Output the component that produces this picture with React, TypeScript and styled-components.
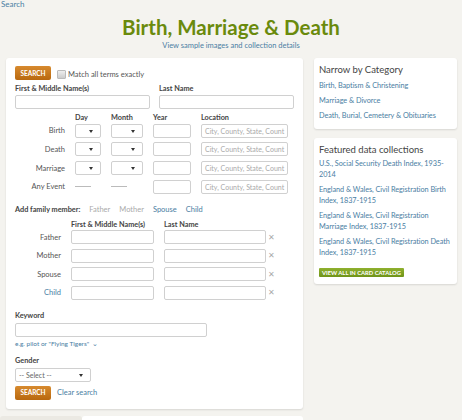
import React from 'react';
import styled, { createGlobalStyle } from 'styled-components';

const Global = createGlobalStyle`
  html, body {
    margin: 0;
    padding: 0;
    background: #f4f3ef;
    font-family: Lato, "Open Sans", Arial, sans-serif;
    color: #333;
  }
  * { box-sizing: border-box; }
`;

const Page = styled.div`
  width: 462px;
  height: 420px;
  overflow: hidden;
`;

const Crumb = styled.a`
  display: block;
  font-size: 8px;
  line-height: 9px;
  padding-left: 1px;
  color: #4a7ea3;
`;

const Title = styled.h1`
  margin: 5px 0 0;
  text-align: center;
  font-size: 20.5px;
  line-height: 26px;
  font-weight: 700;
  color: #6a8a0c;
`;

const SubLink = styled.a`
  display: block;
  text-align: center;
  font-size: 7.5px;
  line-height: 10px;
  margin-top: 1px;
  color: #4a7ea3;
`;

const Columns = styled.div`
  display: flex;
  gap: 11px;
  padding: 0 5px 0 6px;
  margin-top: 7px;
  align-items: flex-start;
`;

const Card = styled.div<{ $w: number }>`
  width: ${p => p.$w}px;
  background: #fff;
  border-radius: 3px;
  box-shadow: 0 1px 2px rgba(0, 0, 0, 0.12);
`;

const MainCard = styled(Card)`
  padding: 8px 9px 9px;
`;

const Side = styled.div`
  display: flex;
  flex-direction: column;
  gap: 9px;
`;

const SideCard = styled(Card)<{ $pb: number }>`
  padding: 5px 5px ${p => p.$pb}px;
`;

const SideTitle = styled.div`
  font-size: 9.5px;
  line-height: 13px;
  color: #444;
  margin-bottom: 2px;
`;

const SideLink = styled.a<{ $gap?: number }>`
  display: block;
  font-size: 7.3px;
  line-height: 11px;
  letter-spacing: -0.05px;
  color: #4a7ea3;
  margin-top: ${p => p.$gap ?? 4}px;
`;

const GreenBtn = styled.div`
  display: inline-block;
  margin-top: 10px;
  height: 9px;
  padding: 0 3px;
  font-size: 5.8px;
  line-height: 9px;
  font-weight: 700;
  color: #fff;
  background: linear-gradient(#8fb02e, #6f9418);
  border-radius: 1px;
`;

const Row = styled.div<{ $gap?: number; $mt?: number }>`
  display: flex;
  align-items: center;
  gap: ${p => p.$gap ?? 6}px;
  margin-top: ${p => p.$mt ?? 0}px;
`;

const OrangeBtn = styled.button`
  width: 36px;
  height: 14px;
  border: none;
  border-radius: 2px;
  padding: 0;
  font-family: inherit;
  font-size: 6.5px;
  font-weight: 700;
  color: #fff;
  background: linear-gradient(#d78a2e, #b8680f);
`;

const Check = styled.span`
  width: 9px;
  height: 9px;
  margin-top: 3px;
  border: 1px solid #bbb;
  background: linear-gradient(#eee, #ccc);
  border-radius: 1px;
`;

const Small = styled.span<{ $c?: string }>`
  font-size: 7.5px;
  color: ${p => p.$c ?? '#555'};
`;

const Label = styled.div<{ $mt?: number }>`
  font-size: 7.3px;
  line-height: 9px;
  font-weight: 700;
  color: #444;
  margin-top: ${p => p.$mt ?? 0}px;
`;

const Input = styled.div<{ $w: number }>`
  width: ${p => p.$w}px;
  height: 14px;
  border: 1px solid #d0d0d0;
  border-radius: 2px;
  background: #fff;
  font-size: 7px;
  line-height: 12px;
  padding-left: 3px;
  color: #aaa;
  white-space: nowrap;
  overflow: hidden;
  position: relative;
`;

const Caret = styled.span`
  position: absolute;
  right: 7px;
  top: 5px;
  width: 0;
  height: 0;
  border-left: 2.5px solid transparent;
  border-right: 2.5px solid transparent;
  border-top: 3px solid #333;
`;

const NameGrid = styled.div`
  display: grid;
  grid-template-columns: 135px 135px;
  column-gap: 9px;
  row-gap: 2px;
  margin-top: 4px;
`;

const EventGrid = styled.div`
  display: grid;
  grid-template-columns: 50px 26px 32px 38px 87px;
  column-gap: 10px;
  row-gap: 4.7px;
  margin-top: 5px;
  align-items: center;
`;

const Head = styled.div`
  font-size: 7.3px;
  line-height: 8px;
  font-weight: 700;
  color: #444;
  margin-bottom: -3px;
`;

const RowLabel = styled.div<{ $c?: string }>`
  font-size: 7.5px;
  text-align: right;
  color: ${p => p.$c ?? '#555'};
`;

const Dash = styled.div`
  height: 1px;
  width: 16px;
  background: #bbb;
`;

const FamGrid = styled.div`
  display: grid;
  grid-template-columns: 46px 83px 102px 8px;
  column-gap: 10px;
  row-gap: 4.5px;
  margin-top: 7px;
  align-items: center;
`;

const X = styled.span`
  font-size: 8px;
  color: #aaa;
  margin-left: -8px;
  line-height: 9px;
`;

const Hint = styled.div`
  font-size: 6.5px;
  line-height: 9px;
  color: #4a7ea3;
  margin-top: 2px;
`;

const Footer = styled.div`
  display: flex;
  margin-top: 7px;
  height: 10px;
`;

const FootTab = styled.div<{ $w: number; $bg: string }>`
  width: ${p => p.$w}px;
  background: ${p => p.$bg};
  border-radius: 3px 3px 0 0;
`;

const events = ['Birth', 'Death', 'Marriage'];
const family = ['Father', 'Mother', 'Spouse', 'Child'];
const loc = 'City, County, State, Count';

export default function App() {
  return (
    <Page>
      <Global />
      <Crumb>Search</Crumb>
      <Title>Birth, Marriage &amp; Death</Title>
      <SubLink>View sample images and collection details</SubLink>
      <Columns>
        <MainCard $w={297}>
          <Row>
            <OrangeBtn>SEARCH</OrangeBtn>
            <Check />
            <Small style={{ marginLeft: -4, marginTop: 3 }}>Match all terms exactly</Small>
          </Row>
          <NameGrid>
            <Label>First &amp; Middle Name(s)</Label>
            <Label>Last Name</Label>
            <Input $w={135} />
            <Input $w={135} />
          </NameGrid>
          <EventGrid>
            <span />
            <Head>Day</Head>
            <Head>Month</Head>
            <Head>Year</Head>
            <Head>Location</Head>
            {events.map(e => (
              <React.Fragment key={e}>
                <RowLabel>{e}</RowLabel>
                <Input $w={26}><Caret /></Input>
                <Input $w={32}><Caret /></Input>
                <Input $w={38} />
                <Input $w={87}>{loc}</Input>
              </React.Fragment>
            ))}
            <RowLabel>Any Event</RowLabel>
            <Dash />
            <Dash />
            <Input $w={38} />
            <Input $w={87}>{loc}</Input>
          </EventGrid>
          <Row $gap={9} $mt={11}>
            <Label>Add family member:</Label>
            <Small $c="#aaa">Father</Small>
            <Small $c="#aaa">Mother</Small>
            <Small $c="#4a7ea3">Spouse</Small>
            <Small $c="#4a7ea3">Child</Small>
          </Row>
          <FamGrid>
            <span />
            <Head>First &amp; Middle Name(s)</Head>
            <Head>Last Name</Head>
            <span />
            {family.map(f => (
              <React.Fragment key={f}>
                <RowLabel $c={f === 'Child' ? '#4a7ea3' : undefined}>{f}</RowLabel>
                <Input $w={83} />
                <Input $w={102} />
                <X>✕</X>
              </React.Fragment>
            ))}
          </FamGrid>
          <Label $mt={11}>Keyword</Label>
          <Row $mt={3}>
            <Input $w={192} />
          </Row>
          <Hint>e.g. pilot or "Flying Tigers" &nbsp;⌄</Hint>
          <Label $mt={8}>Gender</Label>
          <Row $mt={3}>
            <Input $w={76} style={{ color: '#666' }}>-- Select --<Caret /></Input>
          </Row>
          <Row $mt={4}>
            <OrangeBtn>SEARCH</OrangeBtn>
            <Small $c="#4a7ea3">Clear search</Small>
          </Row>
        </MainCard>
        <Side>
          <SideCard $w={143} $pb={8}>
            <SideTitle>Narrow by Category</SideTitle>
            <SideLink $gap={4}>Birth, Baptism &amp; Christening</SideLink>
            <SideLink $gap={4}>Marriage &amp; Divorce</SideLink>
            <SideLink $gap={4}>Death, Burial, Cemetery &amp; Obituaries</SideLink>
          </SideCard>
          <SideCard $w={143} $pb={6}>
            <SideTitle>Featured data collections</SideTitle>
            <SideLink $gap={2}>U.S., Social Security Death Index, 1935-2014</SideLink>
            <SideLink>England &amp; Wales, Civil Registration Birth Index, 1837-1915</SideLink>
            <SideLink>England &amp; Wales, Civil Registration Marriage Index, 1837-1915</SideLink>
            <SideLink>England &amp; Wales, Civil Registration Death Index, 1837-1915</SideLink>
            <GreenBtn>VIEW ALL IN CARD CATALOG</GreenBtn>
          </SideCard>
        </Side>
      </Columns>
      <Footer>
        <FootTab $w={82} $bg="#ebe9e3" />
        <FootTab $w={221} $bg="#fff" />
      </Footer>
    </Page>
  );
}
